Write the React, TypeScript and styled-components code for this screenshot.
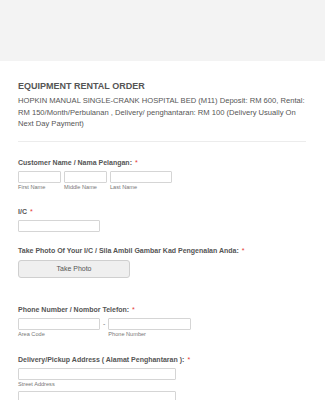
import React from 'react'
import styled, { createGlobalStyle } from 'styled-components';

const GlobalStyle = createGlobalStyle`
  html, body {
    margin: 0;
    padding: 0;
    background: #ffffff;
  }
  body {
    font-family: "Liberation Sans", Arial, sans-serif;
    color: #555555;
  }
`;

const TopBand = styled.div`
  height: 61px;
  background-color: #f3f3f3;
`;

const Form = styled.div`
  padding: 0 19px 0 18px;
`;

const Title = styled.h1`
  margin: 20px 0 0;
  font-size: 9px;
  line-height: 11px;
  font-weight: bold;
  color: #555555;
`;

const Description = styled.p`
  margin: 3px 0 0;
  font-size: 7.6px;
  line-height: 11.6px;
  color: #555555;
`;

const Divider = styled.hr`
  margin: 11px 0 0;
  border: none;
  border-top: 1px solid #ececec;
`;

const Field = styled.div<{ gap: number }>`
  margin-top: ${p => p.gap}px;
`;

const Label = styled.div`
  font-size: 7px;
  line-height: 10px;
  font-weight: bold;
  color: #555555;
`;

const Star = styled.span`
  color: #e53935;
  font-weight: normal;
  margin-left: 3px;
`;

const Row = styled.div`
  display: flex;
  align-items: flex-start;
  gap: 3px;
  margin-top: 3px;
`;

const Part = styled.div`
  display: flex;
  flex-direction: column;
`;

const Input = styled.div<{ w: number }>`
  width: ${p => p.w}px;
  height: 12px;
  box-sizing: border-box;
  border: 1px solid #d5d5d5;
  border-radius: 1px;
  background: #ffffff;
`;

const Sub = styled.span`
  font-size: 5.6px;
  line-height: 8px;
  color: #777777;
`;

const Dash = styled.span`
  font-size: 7px;
  line-height: 12px;
  color: #777777;
`;

const PhotoButton = styled.button`
  display: block;
  margin-top: 4px;
  width: 112px;
  height: 18px;
  border: 1px solid #cfcfcf;
  border-radius: 3px;
  background: #efefef;
  font-family: "Liberation Sans", Arial, sans-serif;
  font-size: 7px;
  color: #555555;
  padding: 0;
`;

function App() {
    return (
        <>
            <GlobalStyle />
            <TopBand />
            <Form>
                <Title>EQUIPMENT RENTAL ORDER</Title>
                <Description>
                    HOPKIN MANUAL SINGLE-CRANK HOSPITAL BED (M11) Deposit: RM 600, Rental: RM 150/Month/Perbulanan , Delivery/ penghantaran: RM 100 (Delivery Usually On Next Day Payment)
                </Description>
                <Divider />

                <Field gap={16}>
                    <Label>Customer Name / Nama Pelangan:<Star>*</Star></Label>
                    <Row>
                        <Part><Input w={43} /><Sub>First Name</Sub></Part>
                        <Part><Input w={43} /><Sub>Middle Name</Sub></Part>
                        <Part><Input w={62} /><Sub>Last Name</Sub></Part>
                    </Row>
                </Field>

                <Field gap={16}>
                    <Label>I/C<Star>*</Star></Label>
                    <Row>
                        <Input w={82} />
                    </Row>
                </Field>

                <Field gap={14}>
                    <Label>Take Photo Of Your I/C / Sila Ambil Gambar Kad Pengenalan Anda:<Star>*</Star></Label>
                    <PhotoButton>Take Photo</PhotoButton>
                </Field>

                <Field gap={27}>
                    <Label>Phone Number / Nombor Telefon:<Star>*</Star></Label>
                    <Row>
                        <Part><Input w={82} /><Sub>Area Code</Sub></Part>
                        <Dash>-</Dash>
                        <Part><Input w={83} /><Sub>Phone Number</Sub></Part>
                    </Row>
                </Field>

                <Field gap={17}>
                    <Label>Delivery/Pickup Address ( Alamat Penghantaran ):<Star>*</Star></Label>
                    <Row>
                        <Part><Input w={158} /><Sub>Street Address</Sub></Part>
                    </Row>
                    <Row>
                        <Input w={158} />
                    </Row>
                </Field>
            </Form>
        </>
    )
}

export default App
